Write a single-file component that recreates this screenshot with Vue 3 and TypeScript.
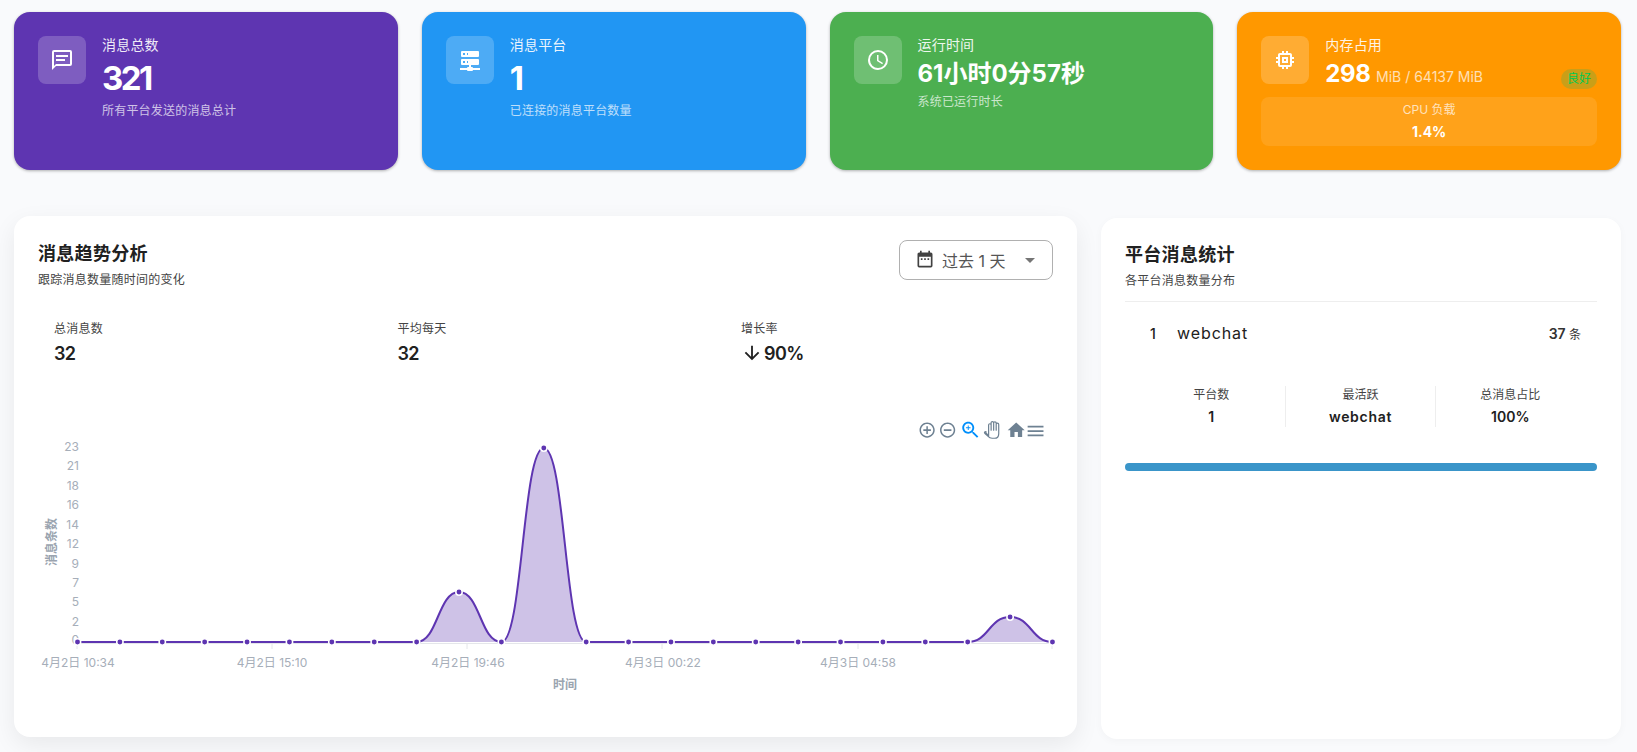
<script setup lang="ts">
const base = 642
const x0 = 77.5
const step = 42.39
const peaks: Record<number, number> = { 9: 592, 11: 448, 22: 617 }
const pts = Array.from({ length: 24 }, (_, i) => ({ x: x0 + i * step, y: peaks[i] ?? base }))
let line = `M${pts[0].x} ${pts[0].y}`
for (let i = 1; i < pts.length; i++) {
  const a = pts[i - 1]
  const b = pts[i]
  const m = (a.x + b.x) / 2
  line += ` C${m} ${a.y} ${m} ${b.y} ${b.x} ${b.y}`
}
const area = `${line} L${pts[23].x} ${base} L${x0} ${base} Z`

const yLabels = [
  ['23', 447], ['21', 466], ['18', 486], ['16', 505], ['14', 525], ['12', 544],
  ['9', 564], ['7', 583], ['5', 602], ['2', 622], ['0', 640],
] as [string, number][]
const xLabels = [
  ['4月2日 10:34', 78], ['4月2日 15:10', 272], ['4月2日 19:46', 468],
  ['4月3日 00:22', 663], ['4月3日 04:58', 858],
] as [string, number][]
const ticks = [77, 272, 467, 662, 858, 1052]

const cards = [
  {
    cls: 'purple', title: '消息总数', value: '321', desc: '所有平台发送的消息总计',
    icon: 'M20,2H4A2,2 0 0,0 2,4V22L6,18H20A2,2 0 0,0 22,16V4A2,2 0 0,0 20,2M20,16H6L4,18V4H20M6,7H18V9H6M6,11H15V13H6',
  },
  {
    cls: 'blue', title: '消息平台', value: '1', desc: '已连接的消息平台数量',
    icon: 'M13,19H14A1,1 0 0,1 15,20H22V22H15A1,1 0 0,1 14,23H10A1,1 0 0,1 9,22H2V20H9A1,1 0 0,1 10,19H11V17H4A1,1 0 0,1 3,16V12A1,1 0 0,1 4,11H20A1,1 0 0,1 21,12V16A1,1 0 0,1 20,17H13V19M4,3H20A1,1 0 0,1 21,4V8A1,1 0 0,1 20,9H4A1,1 0 0,1 3,8V4A1,1 0 0,1 4,3M9,7H10V5H9V7M9,15H10V13H9V15M5,5V7H7V5H5M5,13V15H7V13H5Z',
  },
  {
    cls: 'green', title: '运行时间', value: '61小时0分57秒', desc: '系统已运行时长',
    icon: 'M12,20A8,8 0 0,0 20,12A8,8 0 0,0 12,4A8,8 0 0,0 4,12A8,8 0 0,0 12,20M12,2A10,10 0 0,1 22,12A10,10 0 0,1 12,22C6.47,22 2,17.5 2,12A10,10 0 0,1 12,2M12.5,7V12.25L17,14.92L16.25,16.15L11,13V7H12.5Z',
  },
]
const memIcon = 'M17,17H7V7H17M21,11V9H19V7C19,5.89 18.1,5 17,5H15V3H13V5H11V3H9V5H7C5.89,5 5,5.89 5,7V9H3V11H5V13H3V15H5V17A2,2 0 0,0 7,19H9V21H11V19H13V21H15V19H17A2,2 0 0,0 19,17V15H21V13H19V11M13,13H11V11H13M15,9H9V15H15V9Z'
const stats = [
  { label: '总消息数', value: '32', down: false },
  { label: '平均每天', value: '32', down: false },
  { label: '增长率', value: '90%', down: true },
]
const mini = [
  { label: '平台数', value: '1' },
  { label: '最活跃', value: 'webchat' },
  { label: '总消息占比', value: '100%' },
]
</script>

<template>
  <div class="page">
    <section class="cards">
      <article v-for="c in cards" :key="c.title" class="card" :class="c.cls">
        <div class="head">
          <div class="ico">
            <svg viewBox="0 0 24 24" width="24" height="24"><path :d="c.icon" fill="#fff" /></svg>
          </div>
          <div class="txt">
            <div class="ttl">{{ c.title }}</div>
            <div class="val" :class="{ small: c.cls === 'green' }">{{ c.value }}</div>
            <div class="dsc">{{ c.desc }}</div>
          </div>
        </div>
      </article>
      <article class="card orange">
        <div class="head">
          <div class="ico">
            <svg viewBox="0 0 24 24" width="24" height="24"><path :d="memIcon" fill="#fff" /></svg>
          </div>
          <div class="txt">
            <div class="ttl">内存占用</div>
            <div class="val mem">298 <span class="unit">MiB / 64137 MiB</span></div>
          </div>
        </div>
        <span class="badge">良好</span>
        <div class="cpu">
          <div class="cpu-l">CPU 负载</div>
          <div class="cpu-v">1.4%</div>
        </div>
      </article>
    </section>

    <section class="main">
      <article class="panel trend">
        <header class="trend-head">
          <div class="trend-t">
            <h2 class="h">消息趋势分析</h2>
            <p class="s">跟踪消息数量随时间的变化</p>
          </div>
          <div class="select">
            <svg viewBox="0 0 24 24" width="20" height="20"><path fill="#424242" d="M9,10H7V12H9V10M13,10H11V12H13V10M17,10H15V12H17V10M19,3H18V1H16V3H8V1H6V3H5C3.89,3 3,3.9 3,5V19A2,2 0 0,0 5,21H19A2,2 0 0,0 21,19V5A2,2 0 0,0 19,3M19,19H5V8H19V19Z" /></svg>
            <span class="select-t">过去 1 天</span>
            <svg class="caret" viewBox="0 0 24 24" width="24" height="24"><path fill="#757575" d="M7,10L12,15L17,10H7Z" /></svg>
          </div>
        </header>
        <div class="stats">
          <div v-for="s in stats" :key="s.label">
            <div class="st-l">{{ s.label }}</div>
            <div class="st-v">
              <svg v-if="s.down" class="arrow" viewBox="0 0 24 24" width="22" height="22"><path fill="#212121" d="M11,4H13V16L18.5,10.5L19.92,11.92L12,19.84L4.08,11.92L5.5,10.5L11,16V4Z" /></svg>{{ s.value }}
            </div>
          </div>
        </div>
        <svg class="chart" viewBox="38 420 1015 293" width="1015" height="293">
          <g fill="#6e8192">
            <g transform="translate(918 421) scale(.76)"><path d="M13 7h-2v4H7v2h4v4h2v-4h4v-2h-4V7zm-1-5C6.48 2 2 6.48 2 12s4.48 10 10 10 10-4.48 10-10S17.52 2 12 2zm0 18c-4.41 0-8-3.59-8-8s3.59-8 8-8 8 3.59 8 8-3.59 8-8 8z" /></g>
            <g transform="translate(938.5 421) scale(.76)"><path d="M7 11v2h10v-2H7zm5-9C6.48 2 2 6.48 2 12s4.48 10 10 10 10-4.48 10-10S17.52 2 12 2zm0 18c-4.41 0-8-3.59-8-8s3.59-8 8-8 8 3.59 8 8-3.59 8-8 8z" /></g>
            <g transform="translate(959.5 419) scale(.92)" fill="#008ffb"><path d="M15.5 14h-.79l-.28-.27C15.41 12.59 16 11.11 16 9.5 16 5.91 13.09 3 9.5 3S3 5.91 3 9.5 5.91 16 9.5 16c1.61 0 3.09-.59 4.23-1.57l.27.28v.79l5 4.99L20.49 19l-4.99-5zm-6 0C7.01 14 5 11.99 5 9.5S7.01 5 9.5 5 14 7.01 14 9.5 11.99 14 9.5 14z" /><path d="M12 10h-2v2H9v-2H7V9h2V7h1v2h2v1z" /></g>
            <g transform="translate(984 421) scale(1.15)" fill="none" stroke="#6e8192" stroke-width="1.05" stroke-linecap="round" stroke-linejoin="round">
              <path d="M1 9.5l3 3.5V3.5a1.1 1.1 0 0 1 2.2 0V8M6.2 8V1.6a1.1 1.1 0 0 1 2.2 0V8M8.4 8V1.8a1.1 1.1 0 0 1 2.2 0V8M10.6 8V3a1.1 1.1 0 0 1 2.2 0V11c0 2.6-1.6 4-3.8 4H7C5.4 15 4.6 14.6 3.6 13.4L.6 10.6C0 10 1 8.8 1.8 9.4" />
            </g>
            <g transform="translate(1006 420) scale(.85)"><path d="M10 20v-6h4v6h5v-8h3L12 3 2 12h3v8z" /></g>
            <g transform="translate(1025 420.5) scale(.88)"><path d="M3 18h18v-2H3v2zm0-5h18v-2H3v2zm0-7v2h18V6H3z" /></g>
          </g>
          <text v-for="l in yLabels" :key="l[0]" class="tick" :x="79" :y="l[1] + 4" text-anchor="end">{{ l[0] }}</text>
          <text class="axis" transform="translate(52 542) rotate(-90)" text-anchor="middle" dy="4">消息条数</text>
          <line x1="77" x2="1052" y1="643.5" y2="643.5" stroke="#e4e6ea" />
          <line v-for="t in ticks" :key="t" :x1="t" :x2="t" y1="643" y2="649" stroke="#e4e6ea" />
          <path :d="area" fill="#5e35b1" fill-opacity=".3" />
          <path :d="line" fill="none" stroke="#5e35b1" stroke-width="2" />
          <circle v-for="p in pts" :key="p.x" :cx="p.x" :cy="p.y" r="3.2" fill="#5e35b1" stroke="#fff" stroke-width="1.5" />
          <text v-for="l in xLabels" :key="l[0]" class="tick" :x="l[1]" y="667" text-anchor="middle">{{ l[0] }}</text>
          <text class="axis" x="565" y="689" text-anchor="middle">时间</text>
        </svg>
      </article>

      <article class="panel plat">
        <h2 class="h">平台消息统计</h2>
        <p class="s plat-s">各平台消息数量分布</p>
        <div class="row">
          <span class="rank">1</span>
          <span class="name">webchat</span>
          <span class="count"><b>37</b> 条</span>
        </div>
        <div class="mini">
          <div v-for="m in mini" :key="m.label" class="mini-c">
            <div class="mini-l">{{ m.label }}</div>
            <div class="mini-v">{{ m.value }}</div>
          </div>
        </div>
        <div class="bar"></div>
      </article>
    </section>
  </div>
</template>

<style>
html, body { margin: 0; background: #f9fafc; }
</style>

<style scoped>
.page {
  box-sizing: border-box;
  width: 1637px;
  height: 752px;
  overflow: hidden;
  padding: 12px 16px 0 14px;
  font-family: Inter, "Noto Sans CJK SC", sans-serif;
  color: #212121;
}
.cards {
  display: grid;
  grid-template-columns: repeat(4, 1fr);
  gap: 24px;
}
.card {
  position: relative;
  box-sizing: border-box;
  height: 158px;
  padding: 24px;
  border-radius: 16px;
  color: #fff;
  box-shadow: 0 1px 3px rgba(0, 0, 0, .3);
}
.purple { background: #5e35b1; }
.blue { background: #2196f3; }
.green { background: #4caf50; }
.orange { background: #ff9800; }
.head { display: flex; }
.ico {
  flex: none;
  display: flex;
  align-items: center;
  justify-content: center;
  width: 48px;
  height: 48px;
  margin-right: 16px;
  border-radius: 8px;
  background: rgba(255, 255, 255, .2);
}
.txt { margin-top: -1px; }
.ttl { font-size: 14px; line-height: 20px; opacity: .9; letter-spacing: .2px; }
.val { margin-top: 4px; font-size: 33px; line-height: 38px; font-weight: 700; letter-spacing: -2.5px; }
.val.small { font-size: 24px; line-height: 30px; letter-spacing: 0; }
.val.small + .dsc { margin-top: 3px; }
.val.mem { font-size: 24px; line-height: 30px; letter-spacing: -.3px; }
.unit { font-size: 14px; font-weight: 400; opacity: .7; letter-spacing: 0; }
.dsc { margin-top: 4px; font-size: 12px; line-height: 20px; opacity: .7; letter-spacing: .2px; }
.badge {
  position: absolute;
  top: 57px;
  right: 24px;
  width: 36px;
  height: 20px;
  border-radius: 10px;
  background: rgba(76, 175, 80, .3);
  color: #00c853;
  font-size: 12px;
  line-height: 20px;
  text-align: center;
}
.cpu {
  height: 49px;
  margin-top: 5px;
  border-radius: 8px;
  background: rgba(255, 255, 255, .1);
  text-align: center;
}
.cpu-l { padding-top: 4px; font-size: 12px; line-height: 18px; opacity: .7; }
.cpu-v { margin-top: 3px; font-size: 14px; line-height: 20px; font-weight: 700; }

.main {
  display: grid;
  grid-template-columns: 1063px 520px;
  gap: 24px;
  margin-top: 48px;
}
.panel {
  box-sizing: border-box;
  height: 521px;
  padding: 24px;
  border-radius: 16px;
  background: #fff;
}
.trend {
  transform: translateY(-2px);
  box-shadow: 0 8px 24px rgba(0, 0, 0, .07);
}
.plat { box-shadow: 0 2px 8px rgba(0, 0, 0, .03); }
.trend-head { display: flex; justify-content: space-between; align-items: flex-start; }
.trend-t { padding-top: 1px; }
.h { margin: 0; font-size: 18px; line-height: 26px; font-weight: 700; color: #212121; letter-spacing: .3px; }
.s { margin: 4px 0 0; font-size: 12px; line-height: 18px; color: #444; letter-spacing: .25px; }
.select {
  box-sizing: border-box;
  display: flex;
  align-items: center;
  width: 154px;
  height: 40px;
  padding: 0 10px 0 15px;
  border: 1px solid #b0b0b0;
  border-radius: 8px;
}
.select-t { margin-left: 7px; font-size: 16px; color: #555; }
.caret { margin-left: auto; }
.stats {
  display: grid;
  grid-template-columns: repeat(3, 343.5px);
  margin-top: 30px;
  padding-left: 16px;
}
.st-l { font-size: 12px; line-height: 18px; color: #444; letter-spacing: .25px; padding-top: 1px; margin-bottom: -1px; }
.st-v { display: flex; align-items: center; height: 26px; margin-top: 3px; font-size: 18px; font-weight: 600; color: #212121; letter-spacing: -.6px; }
.arrow { margin-right: 1px; }
.chart { display: block; margin-top: 54px; overflow: visible; }
.tick { font-size: 12px; fill: #a6aeb9; }
.axis { font-size: 12px; font-weight: 700; fill: #9aa4af; }

.plat-s { padding-bottom: 11px; border-bottom: 1px solid #eee; }
.row { display: flex; align-items: center; height: 24px; margin-top: 19px; padding: 0 16px 0 12px; }
.rank { width: 32px; text-align: center; font-size: 14px; font-weight: 500; }
.name { margin-left: 8px; font-size: 16px; letter-spacing: .9px; }
.count { margin-left: auto; font-size: 12px; color: #333; }
.count b { font-size: 14px; font-weight: 600; }
.mini { display: grid; grid-template-columns: repeat(3, 1fr); margin-top: 41px; padding: 0 12px; }
.mini-c { text-align: center; border-right: 1px solid #eee; height: 41px; }
.mini-c:last-child { border-right: 0; }
.mini-l { font-size: 12px; line-height: 18px; color: #444; }
.mini-v { margin-top: 2px; font-size: 14px; line-height: 22px; font-weight: 600; }
.mini-c:nth-child(2) .mini-v { letter-spacing: .7px; }
.bar { height: 8px; margin-top: 36px; border-radius: 4px; background: #3a95c9; }
</style>
